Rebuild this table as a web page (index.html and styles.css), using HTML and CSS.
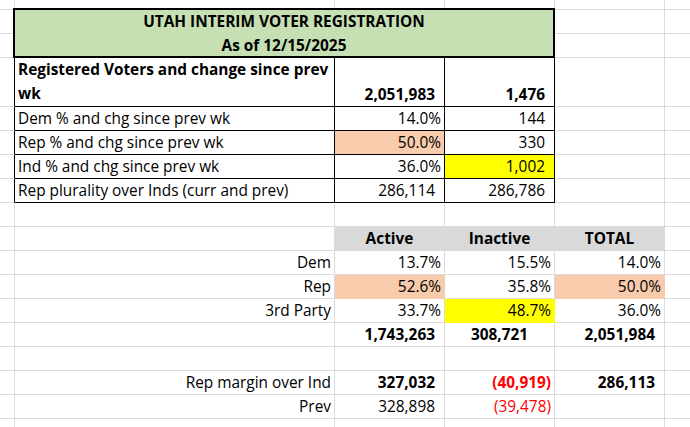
FILE: index.html
```html
<!DOCTYPE html>
<html lang="en">
<head>
<meta charset="utf-8">
<title>Utah Interim Voter Registration</title>
<link rel="stylesheet" href="styles.css">
</head>
<body>
<div class="sheet">
  <!-- row 0 -->
  <div class="c"></div><div class="c"></div><div class="c"></div><div class="c"></div><div class="c"></div><div class="c last"></div>
  <!-- rows 1-2: title -->
  <div class="c"></div>
  <div class="title">
    <div class="title-line">UTAH INTERIM VOTER REGISTRATION</div>
    <div class="title-line">As of 12/15/2025</div>
  </div>
  <div class="c"></div><div class="c last"></div>
  <div class="c"></div><div class="c"></div><div class="c last"></div>
  <!-- row 3 -->
  <div class="c tl"></div>
  <div class="c tb b wrap">Registered Voters and change since prev wk</div>
  <div class="c tb b r pad">2,051,983</div>
  <div class="c tb b r pad">1,476</div>
  <div class="c"></div><div class="c last"></div>
  <!-- row 4 -->
  <div class="c tl"></div>
  <div class="c tb">Dem % and chg since prev wk</div>
  <div class="c tb r">14.0%</div>
  <div class="c tb r pad">144</div>
  <div class="c"></div><div class="c last"></div>
  <!-- row 5 -->
  <div class="c tl"></div>
  <div class="c tb">Rep % and chg since prev wk</div>
  <div class="c orange tb r">50.0%</div>
  <div class="c tb r pad">330</div>
  <div class="c"></div><div class="c last"></div>
  <!-- row 6 -->
  <div class="c tl"></div>
  <div class="c tb">Ind % and chg since prev wk</div>
  <div class="c tb r">36.0%</div>
  <div class="c yellow tb r pad">1,002</div>
  <div class="c"></div><div class="c last"></div>
  <!-- row 7 -->
  <div class="c tl"></div>
  <div class="c tb">Rep plurality over Inds (curr and prev)</div>
  <div class="c tb r pad">286,114</div>
  <div class="c tb r pad">286,786</div>
  <div class="c"></div><div class="c last"></div>
  <!-- row 8 -->
  <div class="c"></div><div class="c"></div><div class="c"></div><div class="c"></div><div class="c"></div><div class="c last"></div>
  <!-- row 9 -->
  <div class="c"></div><div class="c"></div>
  <div class="c gray b ctr">Active</div>
  <div class="c gray b ctr">Inactive</div>
  <div class="c gray b ctr">TOTAL</div>
  <div class="c last"></div>
  <!-- row 10 -->
  <div class="c"></div>
  <div class="c r">Dem</div>
  <div class="c r">13.7%</div>
  <div class="c r">15.5%</div>
  <div class="c r">14.0%</div>
  <div class="c last"></div>
  <!-- row 11 -->
  <div class="c"></div>
  <div class="c r">Rep</div>
  <div class="c orange r">52.6%</div>
  <div class="c r">35.8%</div>
  <div class="c orange r">50.0%</div>
  <div class="c last"></div>
  <!-- row 12 -->
  <div class="c"></div>
  <div class="c r">3rd Party</div>
  <div class="c r">33.7%</div>
  <div class="c yellow r">48.7%</div>
  <div class="c r">36.0%</div>
  <div class="c last"></div>
  <!-- row 13 -->
  <div class="c"></div><div class="c"></div>
  <div class="c b r pad">1,743,263</div>
  <div class="c b ctr">308,721</div>
  <div class="c b r pad">2,051,984</div>
  <div class="c last"></div>
  <!-- row 14 -->
  <div class="c"></div><div class="c"></div><div class="c"></div><div class="c"></div><div class="c"></div><div class="c last"></div>
  <!-- row 15 -->
  <div class="c"></div>
  <div class="c r">Rep margin over Ind</div>
  <div class="c b r pad">327,032</div>
  <div class="c b r red">(40,919)</div>
  <div class="c b r pad">286,113</div>
  <div class="c last"></div>
  <!-- row 16 -->
  <div class="c"></div>
  <div class="c r">Prev</div>
  <div class="c r pad">328,898</div>
  <div class="c r red">(39,478)</div>
  <div class="c"></div>
  <div class="c last"></div>
  <!-- row 17 -->
  <div class="c end"></div><div class="c end"></div><div class="c end"></div><div class="c end"></div><div class="c end"></div><div class="c end last"></div>
</div>
</body>
</html>
```
FILE: styles.css
```css
html, body {
  margin: 0;
  padding: 0;
  background: #fff;
}

.sheet {
  display: grid;
  grid-template-columns: 15px 320px 110px 110px 110px 1fr;
  grid-template-rows: 10px 24px 24px 49px repeat(13, 24px) 1fr;
  width: 690px;
  height: 427px;
  overflow: hidden;
  font-family: "Open Sans", "Liberation Sans", sans-serif;
  font-size: 15.4px;
  line-height: 22px;
  color: #000;
}

.c {
  box-sizing: border-box;
  min-width: 0;
  display: flex;
  align-items: flex-end;
  padding: 0 3px;
  white-space: nowrap;
  border-right: 1px solid #dcdcdc;
  border-bottom: 1px solid #dcdcdc;
}

.last { border-right: none; }
.end { border-bottom: none; }

.r { justify-content: flex-end; }
.ctr { justify-content: center; }
.pad { padding-right: 9px; }
.b { font-weight: 700; }
.red { color: #ff0000; }

.wrap {
  white-space: normal;
  line-height: 24px;
  padding-right: 0;
}

/* fills */
.gray { background: #d9d9d9; border-color: #d9d9d9; }
.orange { background: #f8cbad; border-color: #f8cbad; }
.yellow { background: #ffff00; border-color: #ffff00; }

/* black table borders */
.tb { border-right-color: #000; border-bottom-color: #000; }
.tl { border-right-color: #000; }

/* title block */
.title {
  grid-column: 2 / 5;
  grid-row: 2 / 4;
  z-index: 1;
  box-sizing: border-box;
  background: #c6e0b4;
  border-right: 2px solid #000;
  border-bottom: 2px solid #000;
  box-shadow: -1px -1px 0 1px #000;
  display: flex;
  flex-direction: column;
  align-items: center;
  padding-top: 1px;
  gap: 2px;
  font-weight: 700;
  white-space: nowrap;
}
```
